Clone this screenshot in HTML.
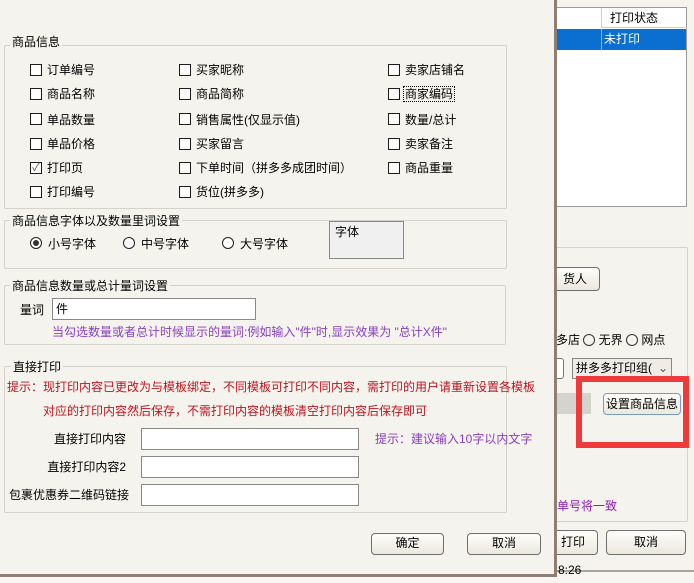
<!DOCTYPE html>
<html><head><meta charset="utf-8"><style>
*{box-sizing:border-box;margin:0;padding:0}
body{width:694px;height:583px;overflow:hidden;background:#f4f3ee;font-family:"Liberation Sans","Noto Sans CJK SC","WenQuanYi Zen Hei",sans-serif;font-size:12px;color:#000;position:relative}
.a{position:absolute;white-space:nowrap;line-height:14px}
.g{position:absolute;border:1px solid #d5d2ca;border-radius:2px}
.gl{position:absolute;background:#f4f3ee;padding:0 2px;line-height:14px}
.cb{position:absolute;width:12px;height:12px;border:1px solid #1c1c1c;background:#fff}
.rb{position:absolute;width:12px;height:12px;border:1px solid #1c1c1c;border-radius:50%;background:#fff}
.in{position:absolute;background:#fff;border:1px solid #7f9db9}
.btn{position:absolute;border:1px solid #6f6f6f;border-radius:4px;background:linear-gradient(#fdfdfb,#ebe8dc);text-align:center;line-height:19px}
</style></head><body>
<div style="position:absolute;left:556px;top:7px;width:131px;height:200px;background:#fff;border:1px solid #9a9a9a"></div>
<div class="a" style="left:601px;top:8px;width:86px;height:20px;border-left:1px solid #ccc;border-bottom:1px solid #ccc;padding-left:8px;line-height:20px">打印状态</div>
<div class="a" style="left:557px;top:29px;width:129px;height:21px;background:#0a6fd0"></div>
<div class="a" style="left:601px;top:29px;height:21px;border-left:1px solid #8ab4e6;color:#fff;padding-left:2px;line-height:21px">未打印</div>
<div class="g" style="left:540px;top:247px;width:148px;height:275px"></div>
<div class="btn" style="left:530px;top:267px;width:70px;height:24px;line-height:22px;padding-left:20px">货人</div>
<div class="a" style="left:556px;top:333px">多店 <span style="display:inline-block;width:12px;height:12px;border:1px solid #333;border-radius:50%;vertical-align:-2px"></span> 无界 <span style="display:inline-block;width:12px;height:12px;border:1px solid #333;border-radius:50%;vertical-align:-2px"></span> 网点</div>
<div class="a" style="left:552px;top:358px;width:12px;height:21px;border:1px solid #777;border-radius:3px;background:#fff"></div>
<div class="a" style="left:572px;top:358px;width:100px;height:21px;border:1px solid #888;background:#eeece4;padding-left:3px;line-height:19px">拼多多打印组(<span style="position:absolute;right:3px;color:#555">⌄</span></div>
<div class="a" style="left:556px;top:393px;width:35px;height:21px;background:#d4d3ce"></div>
<div class="btn" style="left:603px;top:393px;width:78px;height:22px;border-color:#7a9ac6;line-height:20px;font-size:12px">设置商品信息</div>
<div class="a" style="left:576px;top:376px;width:113px;height:72px;border:6px solid #ee3a3a"></div>
<div class="a" style="left:557px;top:499px;color:#8a1fb0">单号将一致</div>
<div class="btn" style="left:530px;top:530px;width:68px;height:25px;line-height:23px;padding-left:18px">打印</div>
<div class="btn" style="left:606px;top:530px;width:80px;height:25px;line-height:23px">取消</div>
<div class="a" style="left:0;top:570px;width:694px;height:2px;background:#aaa39a"></div>
<div class="a" style="left:0;top:572px;width:694px;height:11px;background:#f7f6f2"></div>
<div class="a" style="left:558px;top:563px">8:26</div>
<div style="position:absolute;left:0;top:0;width:557px;height:577px;background:#f4f3ee;border-right:3px solid #8f7e72;border-bottom:3px solid #8f7e72"></div>

<div class="g" style="left:4px;top:45px;width:503px;height:164px"></div>
<div class="gl" style="left:10px;top:35px">商品信息</div>
<div class="cb" style="left:30px;top:64px"></div><div class="a" style="left:47px;top:63px">订单编号</div>
<div class="cb" style="left:30px;top:88px"></div><div class="a" style="left:47px;top:87px">商品名称</div>
<div class="cb" style="left:30px;top:113px"></div><div class="a" style="left:47px;top:113px">单品数量</div>
<div class="cb" style="left:30px;top:138px"></div><div class="a" style="left:47px;top:137px">单品价格</div>
<div class="cb" style="left:30px;top:162px;font-size:11px;line-height:10px;text-align:center;color:#555">✓</div><div class="a" style="left:47px;top:161px">打印页</div>
<div class="cb" style="left:30px;top:186px"></div><div class="a" style="left:47px;top:185px">打印编号</div>
<div class="cb" style="left:179px;top:64px"></div><div class="a" style="left:196px;top:63px">买家昵称</div>
<div class="cb" style="left:179px;top:88px"></div><div class="a" style="left:196px;top:87px">商品简称</div>
<div class="cb" style="left:179px;top:113px"></div><div class="a" style="left:196px;top:113px">销售属性(仅显示值)</div>
<div class="cb" style="left:179px;top:138px"></div><div class="a" style="left:196px;top:137px">买家留言</div>
<div class="cb" style="left:179px;top:162px"></div><div class="a" style="left:196px;top:161px">下单时间（拼多多成团时间）</div>
<div class="cb" style="left:179px;top:186px"></div><div class="a" style="left:196px;top:185px">货位(拼多多)</div>
<div class="cb" style="left:388px;top:64px"></div><div class="a" style="left:405px;top:63px">卖家店铺名</div>
<div class="cb" style="left:388px;top:88px"></div><div class="a" style="left:403px;top:86px;border:1px dotted #000;padding:0 1px">商家编码</div>
<div class="cb" style="left:388px;top:113px"></div><div class="a" style="left:405px;top:113px">数量/总计</div>
<div class="cb" style="left:388px;top:138px"></div><div class="a" style="left:405px;top:137px">卖家备注</div>
<div class="cb" style="left:388px;top:162px"></div><div class="a" style="left:405px;top:161px">商品重量</div>

<div class="g" style="left:4px;top:220px;width:503px;height:49px"></div>
<div class="gl" style="left:10px;top:214px">商品信息字体以及数量里词设置</div>
<div class="rb" style="left:30px;top:237px"><div style="position:absolute;left:2px;top:2px;width:6px;height:6px;border-radius:50%;background:#333"></div></div>
<div class="a" style="left:48px;top:237px">小号字体</div>
<div class="rb" style="left:123px;top:237px"></div><div class="a" style="left:141px;top:237px">中号字体</div>
<div class="rb" style="left:222px;top:237px"></div><div class="a" style="left:240px;top:237px">大号字体</div>
<div class="a" style="left:329px;top:221px;width:75px;height:38px;border:1px solid #888;background:#f0f0f0;padding:3px 0 0 5px">字体</div>

<div class="g" style="left:4px;top:285px;width:502px;height:60px"></div>
<div class="gl" style="left:10px;top:279px">商品信息数量或总计量词设置</div>
<div class="a" style="left:20px;top:303px">量词</div>
<div class="in" style="left:52px;top:298px;width:204px;height:22px;border-color:#888;padding:1px 3px">件</div>
<div class="a" style="left:52px;top:325px;color:#8a3fc0">当勾选数量或者总计时候显示的量词:例如输入"件"时,显示效果为 "总计X件"</div>

<div class="g" style="left:4px;top:366px;width:503px;height:147px"></div>
<div class="gl" style="left:11px;top:360px">直接打印</div>
<div class="a" style="left:7px;top:380px;color:#c0141e">提示：现打印内容已更改为与模板绑定，不同模板可打印不同内容，需打印的用户请重新设置各模板</div>
<div class="a" style="left:43px;top:404px;color:#c0141e">对应的打印内容然后保存，不需打印内容的模板清空打印内容后保存即可</div>
<div class="a" style="left:0;top:432px;width:126px;text-align:right">直接打印内容</div>
<div class="a" style="left:0;top:460px;width:126px;text-align:right">直接打印内容2</div>
<div class="a" style="left:0;top:488px;width:129px;text-align:right">包裹优惠券二维码链接</div>
<div class="in" style="left:141px;top:428px;width:218px;height:22px;border-color:#888"></div>
<div class="in" style="left:141px;top:456px;width:218px;height:22px;border-color:#888"></div>
<div class="in" style="left:141px;top:484px;width:218px;height:22px;border-color:#888"></div>
<div class="a" style="left:375px;top:432px;color:#8a3fc0">提示：建议输入10字以内文字</div>

<div class="btn" style="left:371px;top:533px;width:73px;height:22px">确定</div>
<div class="btn" style="left:467px;top:533px;width:74px;height:22px">取消</div>
</body></html>
